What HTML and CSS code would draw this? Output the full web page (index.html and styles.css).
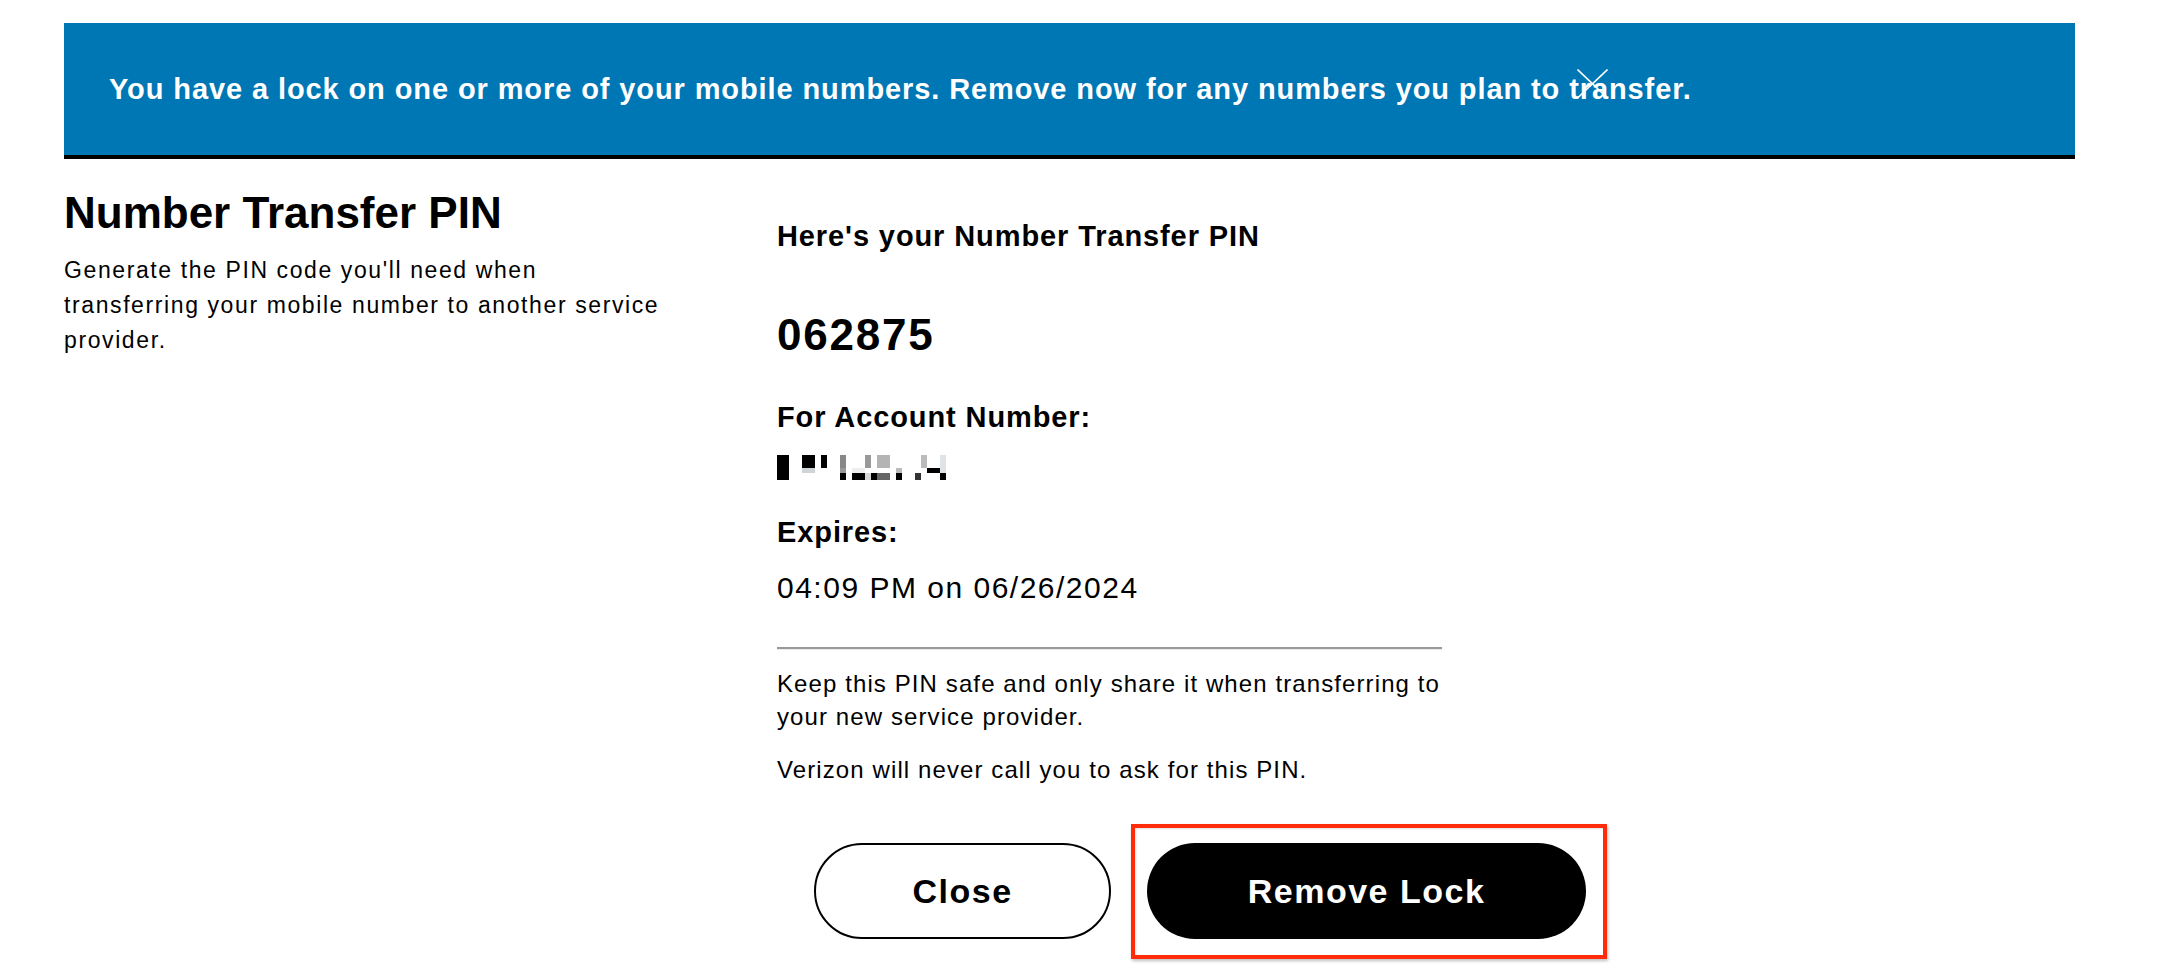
FILE: index.html
```html
<!DOCTYPE html>
<html lang="en">
<head>
    <meta charset="UTF-8">
    <meta name="viewport" content="width=device-width, initial-scale=1.0">
    <title>Number Transfer PIN</title>
    <link rel="stylesheet" href="styles.css">
</head>
<body>
    <div class="page">
        <div class="banner">
            <div class="banner-text">You have a lock on one or more of your mobile numbers. Remove now for any numbers you plan to transfer.</div>
            <svg class="banner-close" width="31" height="29" viewBox="0 0 31 29">
                <line x1="0.5" y1="0.5" x2="30" y2="28.5" stroke="#fff" stroke-width="1.6"/>
                <line x1="30.5" y1="0.5" x2="1" y2="28.5" stroke="#fff" stroke-width="1.6"/>
            </svg>
        </div>

        <div class="content">
            <div class="intro">
                <h1 class="title">Number Transfer PIN</h1>
                <p class="intro-text">Generate the PIN code you'll need when transferring your mobile number to another service provider.</p>
            </div>

            <div class="pin-panel">
                <div class="label first">Here's your Number Transfer PIN</div>
                <div class="pin">062875</div>

                <div class="label account">For Account Number:</div>
                <!-- account number is pixelated in the original -->
                <svg class="masked" width="170" height="26" viewBox="781 455 170 26">
                    <rect x="781" y="455" width="12" height="25" fill="#000"/>
                    <rect x="806" y="455" width="13" height="13" fill="#000"/>
                    <rect x="806" y="468" width="13" height="5" fill="#cfd4d6"/>
                    <rect x="825" y="455" width="6" height="13" fill="#000"/>
                    <rect x="844" y="455" width="6" height="13" fill="#888"/>
                    <rect x="844" y="468" width="6" height="5" fill="#999"/>
                    <rect x="844" y="473" width="6" height="7" fill="#000"/>
                    <rect x="856" y="468" width="13" height="5" fill="#eee"/>
                    <rect x="856" y="473" width="13" height="7" fill="#000"/>
                    <rect x="869" y="455" width="6" height="13" fill="#999"/>
                    <rect x="869" y="473" width="6" height="7" fill="#d6d6d6"/>
                    <rect x="875" y="473" width="6" height="7" fill="#000"/>
                    <rect x="881" y="455" width="13" height="13" fill="#b4b4b4"/>
                    <rect x="881" y="473" width="13" height="7" fill="#666"/>
                    <rect x="900" y="468" width="6" height="5" fill="#bbb"/>
                    <rect x="900" y="473" width="6" height="7" fill="#000"/>
                    <rect x="919" y="473" width="6" height="7" fill="#333"/>
                    <rect x="925" y="455" width="6" height="13" fill="#bbb"/>
                    <rect x="931" y="468" width="13" height="5" fill="#000"/>
                    <rect x="944" y="455" width="6" height="18" fill="#e0e3e6"/>
                    <rect x="944" y="473" width="6" height="7" fill="#000"/>
                </svg>

                <div class="label expires">Expires:</div>
                <div class="expiry">04:09 PM on 06/26/2024</div>

                <div class="divider"></div>

                <p class="note">Keep this PIN safe and only share it when transferring to your new service provider.</p>
                <p class="note">Verizon will never call you to ask for this PIN.</p>

                <div class="actions">
                    <button class="btn btn-close">Close</button>
                    <div class="remove-wrap">
                        <button class="btn btn-remove">Remove Lock</button>
                        <div class="highlight"></div>
                    </div>
                </div>
            </div>
        </div>
    </div>
</body>
</html>
```

FILE: styles.css
```css
body {
    margin: 0;
    background: #fff;
    color: #000;
    font-family: "Liberation Sans", Arial, Helvetica, sans-serif;
}

.page {
    padding: 23px 109px 42px 64px;
}

.banner {
    position: relative;
    display: flex;
    align-items: center;
    height: 132px;
    padding-left: 45px;
    background-color: #0077b5;
    border-bottom: 4px solid #000;
}

.banner-text {
    color: #fff;
    font-size: 29px;
    font-weight: bold;
    letter-spacing: 0.9px;
}

.banner-close {
    position: absolute;
    left: 1513px;
    top: 46px;
}

.content {
    display: grid;
    grid-template-columns: 713px 665px;
}

.title {
    margin: 28px 0 0 0;
    font-size: 44px;
    line-height: 52px;
    font-weight: bold;
}

.intro-text {
    width: 606px;
    margin: 14px 0 0 0;
    font-size: 23px;
    line-height: 35px;
    letter-spacing: 1.6px;
}

.pin-panel {
    padding-top: 59px;
}

.label {
    font-size: 29px;
    line-height: 36px;
    font-weight: bold;
    letter-spacing: 0.9px;
}

.pin {
    margin-top: 55px;
    font-size: 44px;
    line-height: 52px;
    font-weight: bold;
    letter-spacing: 1.8px;
}

.account {
    margin-top: 38px;
}

.masked {
    display: block;
    margin-top: 20px;
}

.expires {
    margin-top: 33px;
}

.expiry {
    margin-top: 20px;
    font-size: 30px;
    line-height: 36px;
    letter-spacing: 1.5px;
}

.divider {
    margin-top: 41px;
    height: 2px;
    background-color: #999;
    box-shadow: 0 1px 0 #ececec;
}

.note {
    margin: 18px 0 0 0;
    font-size: 24px;
    line-height: 33px;
    letter-spacing: 1.1px;
}

.note + .note {
    margin-top: 20px;
}

.actions {
    display: flex;
    align-items: flex-start;
    gap: 36px;
    margin-top: 57px;
    padding-left: 37px;
}

.btn {
    display: block;
    flex-shrink: 0;
    height: 96px;
    border-radius: 48px;
    font-family: inherit;
    font-size: 34px;
    font-weight: bold;
    letter-spacing: 1.5px;
    cursor: pointer;
}

.btn-close {
    width: 297px;
    background: #fff;
    color: #000;
    border: 2px solid #000;
}

.btn-remove {
    width: 439px;
    background: #000;
    color: #fff;
    border: none;
}

.remove-wrap {
    position: relative;
    flex-shrink: 0;
}

.highlight {
    position: absolute;
    top: -19px;
    left: -16px;
    right: -21px;
    bottom: -20px;
    border: 4px solid #ff2b0a;
    box-shadow: 1px 2px 3px rgba(0, 0, 0, 0.25), inset 1px 1px 2px rgba(0, 0, 0, 0.12);
    pointer-events: none;
}
```
